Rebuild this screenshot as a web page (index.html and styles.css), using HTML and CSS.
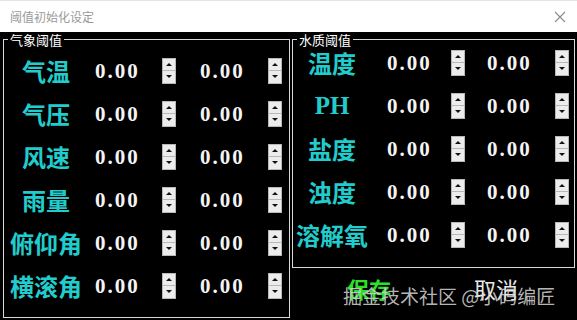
FILE: index.html
```html
<!DOCTYPE html>
<html lang="zh-CN">

<head>
    <meta charset="UTF-8">
    <meta name="viewport" content="width=device-width, initial-scale=1.0">
    <title>阈值初始化设定</title>
    <link rel="stylesheet" href="styles.css">
</head>

<body>
    <div class="window">
        <!-- Title bar -->
        <div class="titlebar">
            <span class="title">阈值初始化设定</span>
            <svg class="close" width="12" height="12" viewBox="0 0 12 12">
                <path d="M1 1 L11 11 M11 1 L1 11" stroke="#8a8a8a" stroke-width="1.1" fill="none"/>
            </svg>
        </div>

        <div class="content">
            <fieldset class="group group-left">
                <legend>气象阈值</legend>
                <div class="rows">
                    <div class="row"><span class="name">气温</span><span class="val">0.00</span><span class="spin"><i class="up"></i><i class="down"></i></span><span class="val val2">0.00</span><span class="spin"><i class="up"></i><i class="down"></i></span></div>
                    <div class="row"><span class="name">气压</span><span class="val">0.00</span><span class="spin"><i class="up"></i><i class="down"></i></span><span class="val val2">0.00</span><span class="spin"><i class="up"></i><i class="down"></i></span></div>
                    <div class="row"><span class="name">风速</span><span class="val">0.00</span><span class="spin"><i class="up"></i><i class="down"></i></span><span class="val val2">0.00</span><span class="spin"><i class="up"></i><i class="down"></i></span></div>
                    <div class="row"><span class="name">雨量</span><span class="val">0.00</span><span class="spin"><i class="up"></i><i class="down"></i></span><span class="val val2">0.00</span><span class="spin"><i class="up"></i><i class="down"></i></span></div>
                    <div class="row"><span class="name">俯仰角</span><span class="val">0.00</span><span class="spin"><i class="up"></i><i class="down"></i></span><span class="val val2">0.00</span><span class="spin"><i class="up"></i><i class="down"></i></span></div>
                    <div class="row"><span class="name">横滚角</span><span class="val">0.00</span><span class="spin"><i class="up"></i><i class="down"></i></span><span class="val val2">0.00</span><span class="spin"><i class="up"></i><i class="down"></i></span></div>
                </div>
            </fieldset>

            <div class="right-col">
                <fieldset class="group group-right">
                    <legend>水质阈值</legend>
                    <div class="rows">
                        <div class="row"><span class="name">温度</span><span class="val">0.00</span><span class="spin"><i class="up"></i><i class="down"></i></span><span class="val val2">0.00</span><span class="spin"><i class="up"></i><i class="down"></i></span></div>
                        <div class="row"><span class="name latin">PH</span><span class="val">0.00</span><span class="spin"><i class="up"></i><i class="down"></i></span><span class="val val2">0.00</span><span class="spin"><i class="up"></i><i class="down"></i></span></div>
                        <div class="row"><span class="name">盐度</span><span class="val">0.00</span><span class="spin"><i class="up"></i><i class="down"></i></span><span class="val val2">0.00</span><span class="spin"><i class="up"></i><i class="down"></i></span></div>
                        <div class="row"><span class="name">浊度</span><span class="val">0.00</span><span class="spin"><i class="up"></i><i class="down"></i></span><span class="val val2">0.00</span><span class="spin"><i class="up"></i><i class="down"></i></span></div>
                        <div class="row"><span class="name">溶解氧</span><span class="val">0.00</span><span class="spin"><i class="up"></i><i class="down"></i></span><span class="val val2">0.00</span><span class="spin"><i class="up"></i><i class="down"></i></span></div>
                    </div>
                </fieldset>
                <div class="actions">
                    <button class="btn btn-save">保存</button>
                    <button class="btn btn-cancel">取消</button>
                </div>
            </div>
        </div>
    </div>

    <div class="watermark">掘金技术社区 @小码编匠</div>
</body>
</html>
```

FILE: styles.css
```css
body {
    margin: 0;
    background-color: #000;
    font-family: "Noto Sans CJK SC", sans-serif;
    overflow: hidden;
}

.window {
    width: 577px;
    height: 320px;
    display: flex;
    flex-direction: column;
}

.titlebar {
    height: 32px;
    background-color: #fff;
    display: flex;
    align-items: center;
    justify-content: space-between;
    padding: 0 11px 0 10px;
    border-top: 1px solid #e4e4e4;
    box-sizing: border-box;
}

.title {
    font-size: 12px;
    color: #9a9a9a;
    line-height: 14px;
}

.content {
    display: flex;
    height: 288px;
}

.group {
    border: 1px solid #d8d8d8;
    margin: 0;
    padding: 0;
    min-width: 0;
    box-sizing: border-box;
}

.group legend {
    margin-left: 4px;
    padding: 0 2px;
    font-size: 13px;
    line-height: 15px;
    color: #fff;
}

.group-left {
    margin-left: 3px;
    width: 287px;
    height: 286px;
}

.group-left .rows {
    padding-top: 2px;
}

.right-col {
    display: flex;
    flex-direction: column;
    margin-left: 2px;
    width: 283px;
}

.group-right {
    height: 236px;
}

.group-right .rows {
    margin-top: -6px;
}

.row {
    display: grid;
    height: 43px;
    align-items: center;
}

.group-left .row {
    grid-template-columns: 76px 78px 14px 92px 14px;
    padding-left: 4px;
}

.group-left .val {
    padding-left: 11px;
}

.group-left .val2 {
    padding-left: 24px;
}

.group-right .row {
    grid-template-columns: 76px 81px 14px 90px 14px;
    padding-left: 1px;
}

.group-right .val {
    padding-left: 17px;
}

.group-right .val2 {
    padding-left: 22px;
}

.name {
    text-align: center;
    font-size: 24px;
    font-weight: bold;
    color: #22cccc;
    line-height: 26px;
}

.name.latin {
    font-family: "Liberation Serif", serif;
    font-size: 25px;
}

.val {
    font-family: "Liberation Serif", serif;
    font-size: 21px;
    font-weight: bold;
    letter-spacing: 2px;
    color: #f4f4f4;
    line-height: 24px;
}

.spin {
    display: flex;
    flex-direction: column;
    width: 14px;
    height: 26px;
    border: 1px solid #b8b8b8;
    box-sizing: border-box;
    background-color: #e6e6e6;
}

.spin i {
    flex: 1;
    display: flex;
    align-items: center;
    justify-content: center;
    background-color: #ececec;
}

.spin i + i {
    border-top: 1px solid #b8b8b8;
}

.spin i::after {
    content: "";
    width: 0;
    height: 0;
    border-left: 3px solid transparent;
    border-right: 3px solid transparent;
}

.spin .up::after {
    border-bottom: 3px solid #111;
}

.spin .down::after {
    border-top: 3px solid #111;
}

.actions {
    flex: 1;
    display: flex;
    align-items: center;
    padding-bottom: 12px;
    box-sizing: border-box;
}

.btn {
    background: none;
    border: none;
    padding: 0;
    font-family: "Noto Sans CJK SC", sans-serif;
    font-size: 22px;
    line-height: 26px;
    cursor: pointer;
}

.btn-save {
    color: #2ee02e;
    margin-left: 55px;
    font-weight: bold;
}

.btn-cancel {
    color: #e8e8e8;
    margin-left: 83px;
}

.watermark {
    position: absolute;
    left: 343px;
    top: 283px;
    font-size: 19px;
    line-height: 26px;
    color: rgba(215, 215, 215, 0.85);
    white-space: nowrap;
}
```
